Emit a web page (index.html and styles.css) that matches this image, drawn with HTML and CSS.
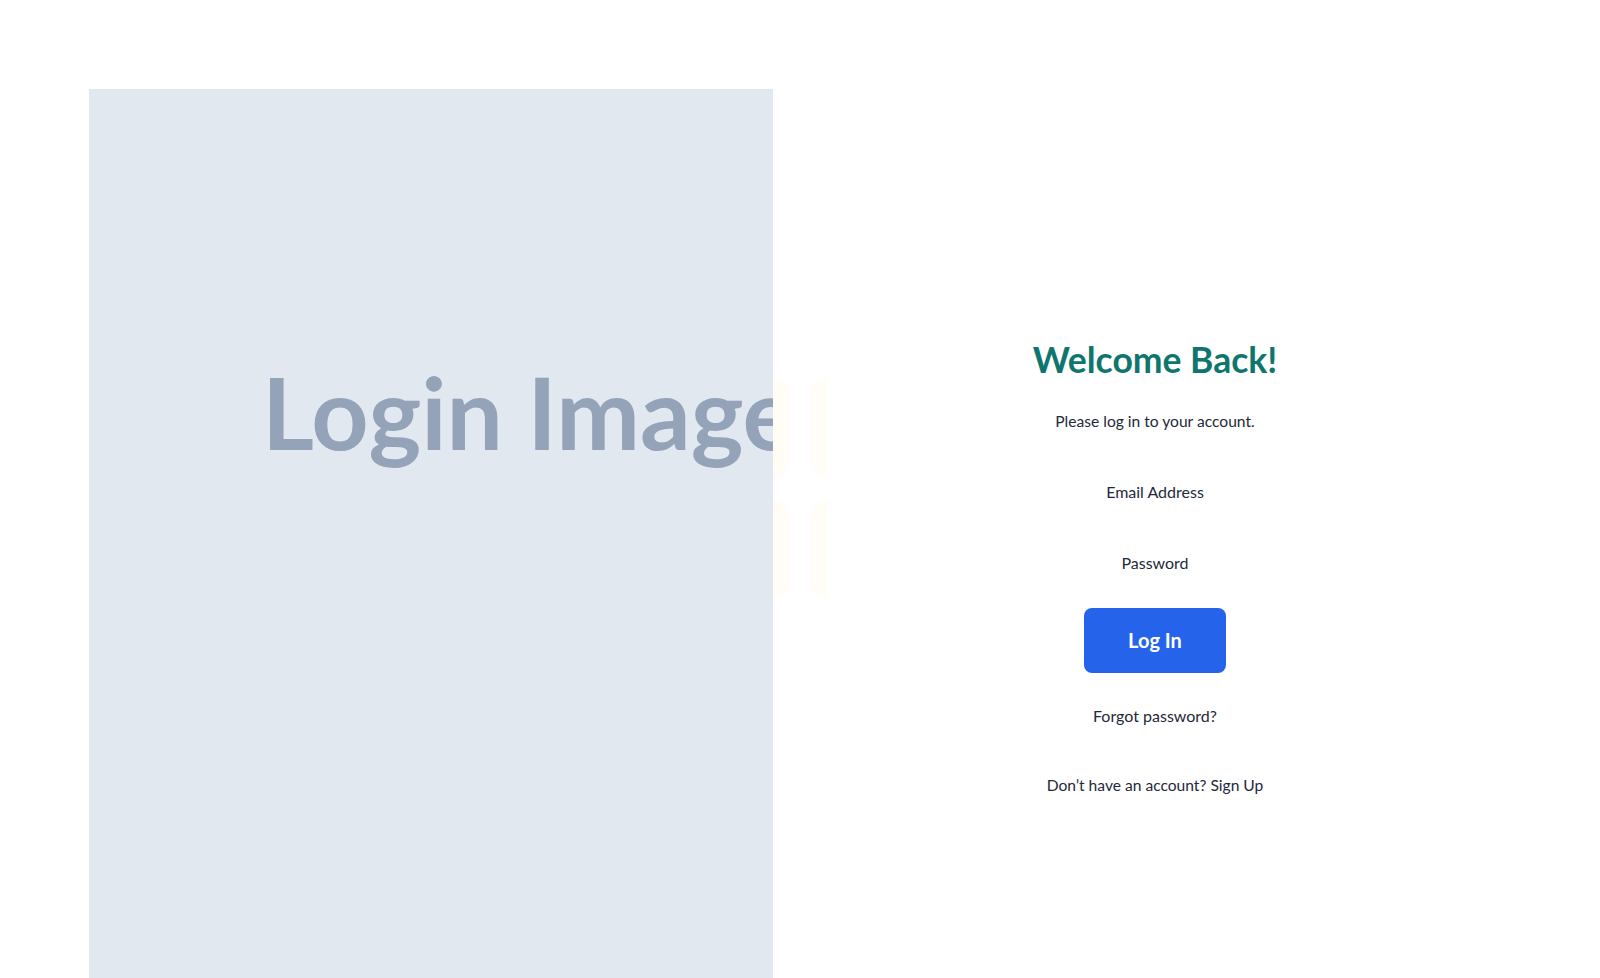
FILE: index.html
```html
<!DOCTYPE html>
<html lang="en">
<head>
    <meta charset="UTF-8">
    <meta name="viewport" content="width=device-width, initial-scale=1.0">
    <title>Login</title>
    <link rel="stylesheet" href="styles.css">
</head>
<body>
    <div class="login-page">
        <div class="login-image">
            <span class="image-label">Login Image</span>
        </div>

        <div class="image-ghost">
            <div class="ghost ghost-right"></div>
            <div class="ghost ghost-left"></div>
            <div class="ghost ghost-right"></div>
            <div class="ghost ghost-left"></div>
        </div>

        <div class="login-form">
            <h1>Welcome Back!</h1>
            <p class="subtitle">Please log in to your account.</p>

            <div class="form-group">
                <label for="email">Email Address</label>
            </div>
            <div class="form-group">
                <label for="password">Password</label>
            </div>

            <button class="login-btn">Log In</button>

            <a href="#" class="forgot-link">Forgot password?</a>
            <p class="signup">Don’t have an account? <a href="#">Sign Up</a></p>
        </div>
    </div>
</body>
</html>
```

FILE: styles.css
```css
body {
    margin: 0;
    background-color: #ffffff;
    color: #1e293b;
    font-family: 'Lato', 'Liberation Sans', sans-serif;
    overflow: hidden;
}

.login-page {
    display: flex;
    padding: 89px 0 0 89px;
    height: 889px;
}

.login-image {
    width: 684px;
    height: 889px;
    flex-shrink: 0;
    background-color: #e2e8f0;
    overflow: hidden;
    padding: 272px 0 0 173px;
    box-sizing: border-box;
    white-space: nowrap;
}

.image-label {
    display: block;
    font-size: 100px;
    line-height: 100px;
    font-weight: 700;
    color: #94a3b8;
}

.image-ghost {
    width: 57px;
    flex-shrink: 0;
    display: grid;
    grid-template-columns: 16px 16px;
    grid-template-rows: 99px 98px;
    column-gap: 22px;
    row-gap: 23px;
    align-content: start;
    padding-top: 289px;
    box-sizing: border-box;
}

.ghost {
    background-color: #fffdf6;
}

.ghost-right {
    border-radius: 0 16px 16px 0;
}

.ghost-left {
    border-radius: 16px 0 0 16px;
}

.login-form {
    width: 650px;
    flex-shrink: 0;
    display: flex;
    flex-direction: column;
    align-items: center;
    padding-top: 249px;
}

h1 {
    margin: 0;
    font-size: 35.5px;
    line-height: 44px;
    font-weight: 700;
    color: #0f766e;
}

.subtitle {
    margin: 27px 0 0;
    font-size: 15.6px;
    line-height: 24px;
}

.form-group {
    margin-top: 47px;
}

.form-group + .form-group {
    margin-top: 47px;
}

label {
    display: block;
    font-size: 16px;
    line-height: 24px;
}

.login-btn {
    margin-top: 33px;
    padding: 20px 44px;
    font-family: inherit;
    font-size: 20px;
    line-height: 25px;
    font-weight: 700;
    color: #ffffff;
    background-color: #2563eb;
    border: none;
    border-radius: 8px;
    cursor: pointer;
}

.forgot-link {
    margin-top: 31px;
    font-size: 16px;
    line-height: 24px;
    color: #1e293b;
    text-decoration: none;
}

.signup {
    margin: 45px 0 0;
    font-size: 15.6px;
    line-height: 24px;
}

.signup a {
    color: #1e293b;
    text-decoration: none;
}
```
